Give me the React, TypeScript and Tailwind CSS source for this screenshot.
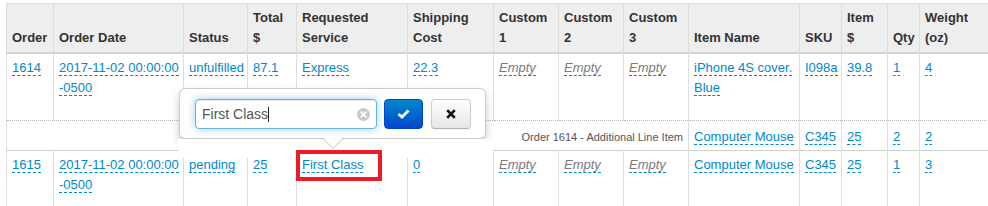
import React from "react";

const L = ({ children }: { children: React.ReactNode }) => (
  <span className="text-[#0088cc] border-b border-dashed border-[#0088cc]">{children}</span>
);
const E = () => (
  <span className="italic text-[#7a7a7a] border-b border-dashed border-[#0088cc]">Empty</span>
);

const widths = [47, 130, 64, 49, 111, 86, 65, 65, 65, 111, 42, 46, 32, 70];

const th =
  "px-[5px] pt-[4px] pb-[4px] align-bottom text-left font-bold text-[13px] leading-[20px] text-[#333] bg-[#eeeeee] border-x border-t border-[#dddddd] border-b-2 border-b-[#d4d4d4]";
const td1 = "px-[5px] pt-[4px] align-top text-[13px] leading-[20px] whitespace-nowrap border-x border-[#dddddd] h-[67px]";
const td2 =
  "px-[5px] pt-[6px] align-top text-[13px] leading-[20px] whitespace-nowrap border-x border-[#dddddd] border-t border-t-[#bbbbbb] [border-top-style:dotted] h-[30px]";
const td3 = "px-[5px] pt-[4px] align-top text-[13px] leading-[20px] whitespace-nowrap border-x border-[#dddddd] border-t border-t-[#d0d0d0] h-[60px]";

export default function App() {
  return (
    <div className="relative w-[988px] h-[206px] overflow-hidden bg-white font-['Liberation_Sans',Arial,sans-serif]">
      <div className="pl-[6px] pt-[3px]">
        <table className="table-fixed border-collapse w-[983px]">
          <colgroup>
            {widths.map((w, i) => (
              <col key={i} style={{ width: w }} />
            ))}
          </colgroup>
          <thead>
            <tr>
              <th className={th}>Order</th>
              <th className={th}>Order Date</th>
              <th className={th}>Status</th>
              <th className={th}>Total<br />$</th>
              <th className={th}>Requested<br />Service</th>
              <th className={th}>Shipping<br />Cost</th>
              <th className={th}>Custom<br />1</th>
              <th className={th}>Custom<br />2</th>
              <th className={th}>Custom<br />3</th>
              <th className={th}>Item Name</th>
              <th className={th}>SKU</th>
              <th className={th}>Item<br />$</th>
              <th className={th}>Qty</th>
              <th className={th}>Weight<br />(oz)</th>
            </tr>
          </thead>
          <tbody>
            <tr>
              <td className={td1}><L>1614</L></td>
              <td className={td1}><L>2017-11-02 00:00:00</L><br /><L>-0500</L></td>
              <td className={td1}><L>unfulfilled</L></td>
              <td className={td1}><L>87.1</L></td>
              <td className={td1}><L>Express</L></td>
              <td className={td1}><L>22.3</L></td>
              <td className={td1}><E /></td>
              <td className={td1}><E /></td>
              <td className={td1}><E /></td>
              <td className={td1}><L>iPhone 4S cover.</L><br /><L>Blue</L></td>
              <td className={td1}><L>I098a</L></td>
              <td className={td1}><L>39.8</L></td>
              <td className={td1}><L>1</L></td>
              <td className={td1}><L>4</L></td>
            </tr>
            <tr>
              <td colSpan={9} className={td2 + " text-right !text-[11px] text-[#555]"}>
                Order 1614 - Additional Line Item
              </td>
              <td className={td2}><L>Computer Mouse</L></td>
              <td className={td2}><L>C345</L></td>
              <td className={td2}><L>25</L></td>
              <td className={td2}><L>2</L></td>
              <td className={td2}><L>2</L></td>
            </tr>
            <tr>
              <td className={td3}><L>1615</L></td>
              <td className={td3}><L>2017-11-02 00:00:00</L><br /><L>-0500</L></td>
              <td className={td3}><L>pending</L></td>
              <td className={td3}><L>25</L></td>
              <td className={td3}><L>First Class</L></td>
              <td className={td3}><L>0</L></td>
              <td className={td3}><E /></td>
              <td className={td3}><E /></td>
              <td className={td3}><E /></td>
              <td className={td3}><L>Computer Mouse</L></td>
              <td className={td3}><L>C345</L></td>
              <td className={td3}><L>25</L></td>
              <td className={td3}><L>1</L></td>
              <td className={td3}><L>3</L></td>
            </tr>
          </tbody>
        </table>
      </div>

      {/* popover */}
      <div className="absolute left-[179px] top-[88px] w-[307px] h-[51px] bg-white border border-black/20 rounded-[6px] shadow-[0_5px_10px_rgba(0,0,0,0.2)] flex items-start pl-[15px] pt-[10px]">
        <div className="relative w-[182px] h-[30px] border border-[#66afe9] rounded-[4px] bg-white shadow-[inset_0_1px_1px_rgba(0,0,0,0.075),0_0_8px_rgba(102,175,233,0.6)] flex items-center pl-[6px] text-[14px] text-[#555]">
          <span>First Class</span>
          <span className="inline-block w-px h-[15px] bg-[#222]" />
          <svg className="absolute right-[6px] top-[8px]" width="13" height="13" viewBox="0 0 13 13">
            <circle cx="6.5" cy="6.5" r="6.5" fill="#c9c9c9" />
            <path d="M4.2 4.2 L8.8 8.8 M8.8 4.2 L4.2 8.8" stroke="#fff" strokeWidth="1.8" strokeLinecap="round" />
          </svg>
        </div>
        <div className="ml-[7px] w-[39px] h-[30px] rounded-[4px] border border-[#0044cc] bg-linear-to-b from-[#0088cc] to-[#0044cc] flex items-center justify-center">
          <svg width="13" height="10" viewBox="0 0 13 10">
            <path d="M1.5 5 L5 8 L11.5 1.5" stroke="#fff" strokeWidth="2.8" fill="none" strokeLinejoin="miter" />
          </svg>
        </div>
        <div className="ml-[8px] w-[40px] h-[30px] rounded-[4px] border border-[#cccccc] border-b-[#b3b3b3] bg-linear-to-b from-white to-[#e6e6e6] shadow-[0_1px_2px_rgba(0,0,0,0.05)] flex items-center justify-center">
          <svg width="10" height="10" viewBox="0 0 10 10">
            <path d="M1.2 1.2 L8.8 8.8 M8.8 1.2 L1.2 8.8" stroke="#111" strokeWidth="2.6" />
          </svg>
        </div>
      </div>

      {/* white area below popover */}
      <div className="absolute left-[178px] top-[139px] w-[315px] h-[19px] bg-white" />

      {/* arrow */}
      <div className="absolute left-[322px] top-[138px] w-0 h-0 border-x-[11px] border-x-transparent border-t-[11px] border-t-black/25" />
      <div className="absolute left-[323px] top-[138px] w-0 h-0 border-x-[10px] border-x-transparent border-t-[10px] border-t-white" />

      {/* red annotation */}
      <div className="absolute left-[296px] top-[150px] w-[86px] h-[31px] border-4 border-[#ed1c24]" />
    </div>
  );
}
